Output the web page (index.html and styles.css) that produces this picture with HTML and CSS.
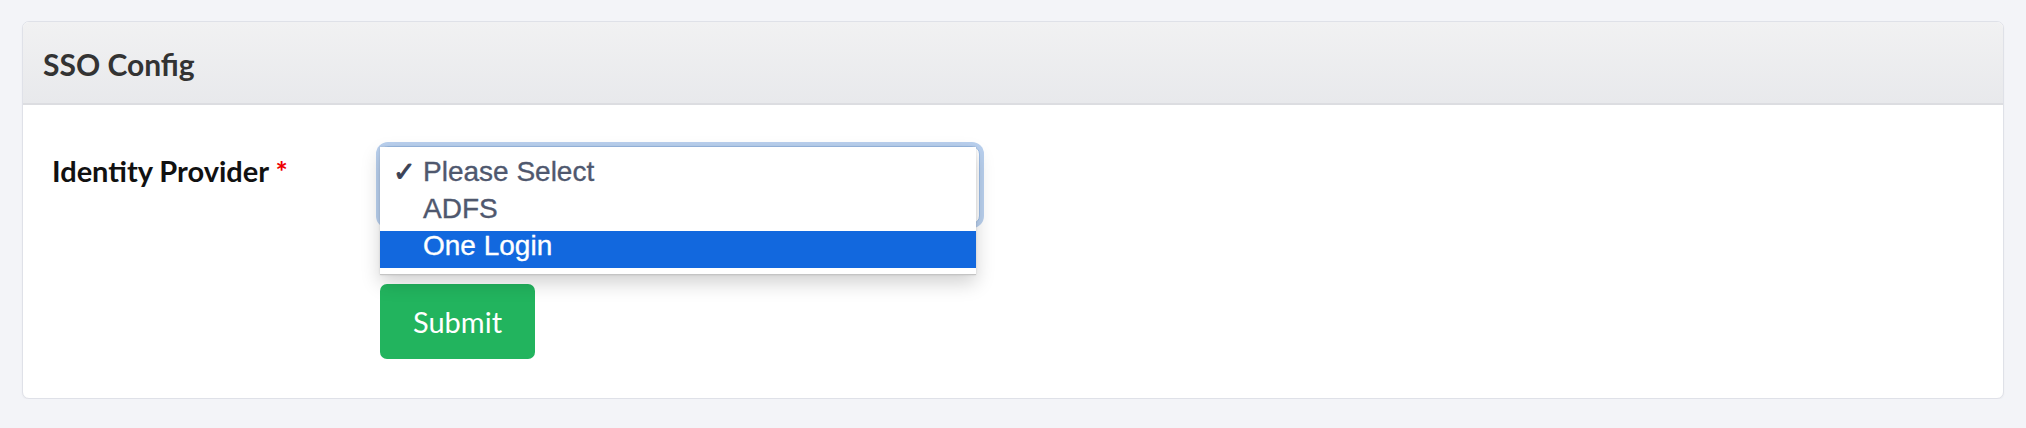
FILE: index.html
```html
<!DOCTYPE html>
<html lang="en">
<head>
<meta charset="utf-8">
<title>SSO Config</title>
<link rel="stylesheet" href="styles.css">
</head>
<body>
<div class="card">
  <div class="card-header">SSO Config</div>
  <div class="card-body">
    <div class="form-row">
      <label class="form-label">Identity Provider <span class="req">*</span></label>
      <div class="form-field">
        <div class="select-wrap">
          <div class="select-box"></div>
          <ul class="popup">
            <li class="opt"><span class="check">✓</span>Please Select</li>
            <li class="opt">ADFS</li>
            <li class="opt opt-active">One Login</li>
          </ul>
        </div>
        <button class="btn-submit" type="button">Submit</button>
      </div>
    </div>
  </div>
</div>
</body>
</html>
```

FILE: styles.css
```css
html, body {
  margin: 0;
  padding: 0;
}
body {
  background: #f3f4f8;
  font-family: Lato, "Noto Sans", sans-serif;
  padding: 21px 22px 0 22px;
}
.card {
  background: #fff;
  border: 1px solid #dfe1e8;
  border-radius: 7px;
  height: 378px;
  box-sizing: border-box;
  box-shadow: 0 1px 2px rgba(0,0,0,0.04);
  overflow: hidden;
}
.card-header {
  height: 83px;
  box-sizing: border-box;
  background: linear-gradient(#f1f1f2, #e8e9ec);
  border-bottom: 2px solid #dcdde1;
  padding: 3px 20px 0 20px;
  display: flex;
  align-items: center;
  font-weight: 700;
  font-size: 30px;
  color: #333;
}
.card-body {
  padding: 41px 29px 40px 29px;
}
.form-row {
  display: grid;
  grid-template-columns: 328px 600px;
}
.form-label {
  font-weight: 700;
  font-size: 29px;
  line-height: 42px;
  padding-top: 4px;
  color: #111;
}
.req {
  color: #ee0000;
}
.form-field {
  display: flex;
  flex-direction: column;
  align-items: flex-start;
}
.select-wrap {
  position: relative;
  width: 600px;
  height: 78px;
}
.select-box {
  width: 600px;
  height: 78px;
  box-sizing: border-box;
  border: 1px solid #9dbde6;
  border-radius: 8px;
  box-shadow: 0 0 0 4px #b9d0ee;
  background: #fff;
}
.popup {
  position: absolute;
  left: 0;
  top: 1px;
  width: 596px;
  margin: 0;
  padding: 10px 0 6px 0;
  list-style: none;
  background: #fff;
  border-bottom: 1px solid #c4c4c4;
  box-shadow: 0 8px 18px rgba(0,0,0,0.18), 0 0 2px rgba(0,0,0,0.12);
  font-family: "Liberation Sans", Arial, sans-serif;
  font-size: 28px;
  color: #4f586e;
  -webkit-text-stroke: 0.35px currentColor;
}
.opt {
  height: 37px;
  box-sizing: border-box;
  line-height: 28px;
  padding: 1px 0 8px 43px;
  position: relative;
}
.opt-active {
  background: #1268de;
  color: #fff;
}
.check {
  position: absolute;
  left: 13px;
  top: 1px;
  font-family: "DejaVu Sans", sans-serif;
  font-size: 27px;
  line-height: 28px;
  color: #3b4256;
  -webkit-text-stroke: 1px #3b4256;
}
.btn-submit {
  margin-top: 60px;
  width: 155px;
  height: 75px;
  border: none;
  border-radius: 7px;
  background: #22b45e;
  color: #fff;
  font-family: Lato, "Noto Sans", sans-serif;
  font-size: 29px;
  padding: 0;
}
```
